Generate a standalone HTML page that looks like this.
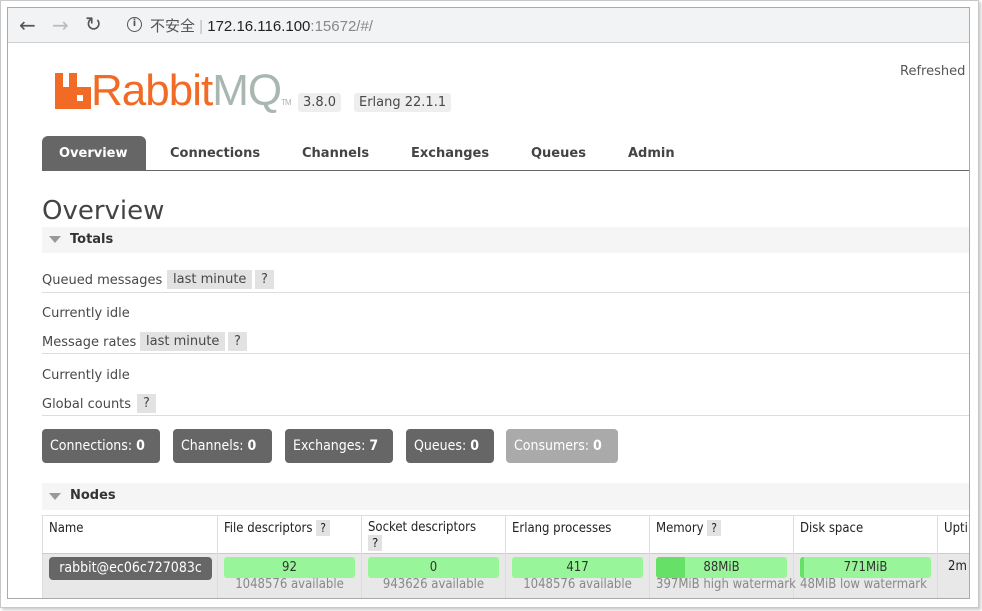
<!DOCTYPE html>
<html><head><meta charset="utf-8"><style>
*{margin:0;padding:0;box-sizing:border-box}
body{width:982px;height:611px;background:#fff;position:relative;overflow:hidden;font-family:Verdana,"DejaVu Sans","Liberation Sans",sans-serif;color:#484848}
.a{position:absolute;white-space:nowrap}
.outer{left:0;top:0;width:979px;height:608px;border:1px solid #c8c8c8;box-shadow:2px 2px 3px #ccc}
.win{left:7px;top:7px;width:963px;height:592px;border:1px solid #aaa;overflow:hidden;background:#fff}
.bar{left:0;top:0;width:961px;height:35px;background:#f1f3f4;border-bottom:1px solid #d0d0d0}
.tag{background:#eee;border-radius:3px;font-size:13px;padding:2px 5px}
.tab{font-weight:bold;font-size:13px;color:#444}
.hr{height:1px;background:#ddd}
.q{background:#e2e2e2;font-size:13px;padding:2px 6px}
.lbl{font-size:13px}
.cnt{top:421px;height:34px;border-radius:4px;background:#666;color:#fff;font-size:14px;line-height:34px;padding:0 8px;font-family:"DejaVu Sans Condensed","Liberation Sans Narrow",sans-serif}
.cnt b{font-weight:bold}
.th{font-size:13px;top:513px;font-family:"DejaVu Sans Condensed",sans-serif;color:#222}
.bar2{height:21px;background:#99f599;border-radius:3px;text-align:center;font-size:13px;line-height:21px;top:549px;color:#333;font-family:"DejaVu Sans Condensed",sans-serif}
.sub{top:569px;font-size:13px;color:#888;font-family:"DejaVu Sans Condensed",sans-serif;text-align:center}
</style></head><body>
<div class="a outer"></div>
<div class="a win">
 <div class="a bar"></div>
 <div class="a" style="left:11px;top:5px;font-size:20px;color:#555">←</div>
 <div class="a" style="left:44px;top:5px;font-size:20px;color:#bbb">→</div>
 <div class="a" style="left:77px;top:4px;font-size:20px;color:#555">↻</div>
 <div class="a" style="left:119px;top:9px;width:15px;height:15px;border:1.6px solid #555;border-radius:50%;font-size:10px;line-height:12px;text-align:center;font-weight:bold;color:#555">i</div>
 <div class="a" style="left:142px;top:7px;font-size:15px;color:#555;font-family:'Liberation Sans','Noto Sans CJK SC',sans-serif">不安全 <span style="color:#bbb">|</span> <span style="color:#222">172.16.116.100</span><span style="color:#888">:15672/#/</span></div>

 <svg class="a" style="left:47px;top:65px" width="36" height="36"><path d="M0 0h8v14h6V0h8v14h14v22H0z" fill="#f26b26"/><rect x="22" y="22" width="6" height="6" fill="#fff"/></svg>
 <div class="a" style="left:83px;top:58px;font-family:'Liberation Sans',sans-serif;font-size:44px;color:#f26b26;letter-spacing:-1px;line-height:50px">Rabbit<span style="color:#a8b8b0">MQ</span><span style="font-size:8px;color:#a8b8b0">TM</span></div>
 <div class="a tag" style="left:290px;top:85px">3.8.0</div>
 <div class="a tag" style="left:346px;top:85px">Erlang 22.1.1</div>
 <div class="a" style="left:892px;top:56px;font-size:13px;color:#555">Refreshed</div>

 <div class="a" style="left:34px;top:128px;width:104px;height:35px;background:#666;border-radius:6px 6px 0 0"></div>
 <div class="a" style="left:34px;top:162px;width:930px;height:1px;background:#666"></div>
 <div class="a tab" style="left:51px;top:138px;color:#fff">Overview</div>
 <div class="a tab" style="left:162px;top:138px">Connections</div>
 <div class="a tab" style="left:294px;top:138px">Channels</div>
 <div class="a tab" style="left:403px;top:138px">Exchanges</div>
 <div class="a tab" style="left:523px;top:138px">Queues</div>
 <div class="a tab" style="left:620px;top:138px">Admin</div>

 <div class="a" style="left:34px;top:188px;font-size:26px;color:#444">Overview</div>
 <div class="a" style="left:34px;top:219px;width:930px;height:26px;background:#f5f5f5"></div>
 <div class="a" style="left:41px;top:228px;width:0;height:0;border-left:6px solid transparent;border-right:6px solid transparent;border-top:7px solid #999"></div>
 <div class="a" style="left:62px;top:224px;font-size:13px;font-weight:bold;color:#333">Totals</div>

 <div class="a lbl" style="left:34px;top:265px">Queued messages</div>
 <div class="a q" style="left:159px;top:262px">last minute</div>
 <div class="a q" style="left:247px;top:262px">?</div>
 <div class="a hr" style="left:34px;top:284px;width:930px"></div>
 <div class="a lbl" style="left:34px;top:298px">Currently idle</div>
 <div class="a lbl" style="left:34px;top:327px">Message rates</div>
 <div class="a q" style="left:132px;top:324px">last minute</div>
 <div class="a q" style="left:220px;top:324px">?</div>
 <div class="a hr" style="left:34px;top:345px;width:930px"></div>
 <div class="a lbl" style="left:34px;top:360px">Currently idle</div>
 <div class="a lbl" style="left:34px;top:389px">Global counts</div>
 <div class="a q" style="left:129px;top:386px">?</div>
 <div class="a hr" style="left:34px;top:407px;width:930px"></div>

 <div class="a cnt" style="left:34px;width:118px">Connections: <b>0</b></div>
 <div class="a cnt" style="left:165px;width:99px">Channels: <b>0</b></div>
 <div class="a cnt" style="left:277px;width:108px">Exchanges: <b>7</b></div>
 <div class="a cnt" style="left:398px;width:88px">Queues: <b>0</b></div>
 <div class="a cnt" style="left:498px;width:112px;background:#aaa">Consumers: <b>0</b></div>

 <div class="a" style="left:34px;top:475px;width:930px;height:27px;background:#f5f5f5"></div>
 <div class="a" style="left:41px;top:485px;width:0;height:0;border-left:6px solid transparent;border-right:6px solid transparent;border-top:7px solid #999"></div>
 <div class="a" style="left:62px;top:480px;font-size:13px;font-weight:bold;color:#333">Nodes</div>

 <div class="a" style="left:34px;top:507px;width:930px;height:86px;border:1px solid #ddd;border-right:none"></div>
 <div class="a" style="left:35px;top:545px;width:929px;height:48px;background:#e8e8e8"></div>
 <div class="a" style="left:34px;top:545px;width:930px;height:1px;background:#ccc"></div>
 <div class="a" style="left:209px;top:507px;width:1px;height:86px;background:#ddd"></div>
 <div class="a" style="left:353px;top:507px;width:1px;height:86px;background:#ddd"></div>
 <div class="a" style="left:497px;top:507px;width:1px;height:86px;background:#ddd"></div>
 <div class="a" style="left:641px;top:507px;width:1px;height:86px;background:#ddd"></div>
 <div class="a" style="left:785px;top:507px;width:1px;height:86px;background:#ddd"></div>
 <div class="a" style="left:929px;top:507px;width:1px;height:86px;background:#ddd"></div>
 <div class="a th" style="left:41px">Name</div>
 <div class="a th" style="left:216px">File descriptors <span class="q" style="font-size:12px;padding:1px 4px">?</span></div>
 <div class="a th" style="left:360px;top:512px">Socket descriptors</div>
 <div class="a q" style="left:360px;top:527px;font-size:12px;padding:1px 4px;color:#222">?</div>
 <div class="a th" style="left:504px">Erlang processes</div>
 <div class="a th" style="left:648px">Memory <span class="q" style="font-size:12px;padding:1px 4px">?</span></div>
 <div class="a th" style="left:792px">Disk space</div>
 <div class="a th" style="left:936px">Upti</div>

 <div class="a" style="left:41px;top:549px;width:163px;height:23px;background:#666;border-radius:4px;color:#fff;font-size:14px;line-height:23px;text-align:center;font-family:'DejaVu Sans Condensed',sans-serif">rabbit@ec06c727083c</div>
 <div class="a bar2" style="left:216px;width:131px">92</div>
 <div class="a bar2" style="left:360px;width:131px">0</div>
 <div class="a bar2" style="left:504px;width:131px">417</div>
 <div class="a bar2" style="left:648px;width:131px;background:linear-gradient(90deg,#66e066 0 29px,#99f599 29px)">88MiB</div>
 <div class="a bar2" style="left:792px;width:131px;background:linear-gradient(90deg,#66e066 0 4px,#99f599 4px)">771MiB</div>
 <div class="a sub" style="left:216px;width:131px">1048576 available</div>
 <div class="a sub" style="left:360px;width:131px">943626 available</div>
 <div class="a sub" style="left:504px;width:131px">1048576 available</div>
 <div class="a sub" style="left:648px">397MiB high watermark</div>
 <div class="a sub" style="left:792px">48MiB low watermark</div>
 <div class="a th" style="left:940px;top:551px">2m</div>
</div>
</body></html>
